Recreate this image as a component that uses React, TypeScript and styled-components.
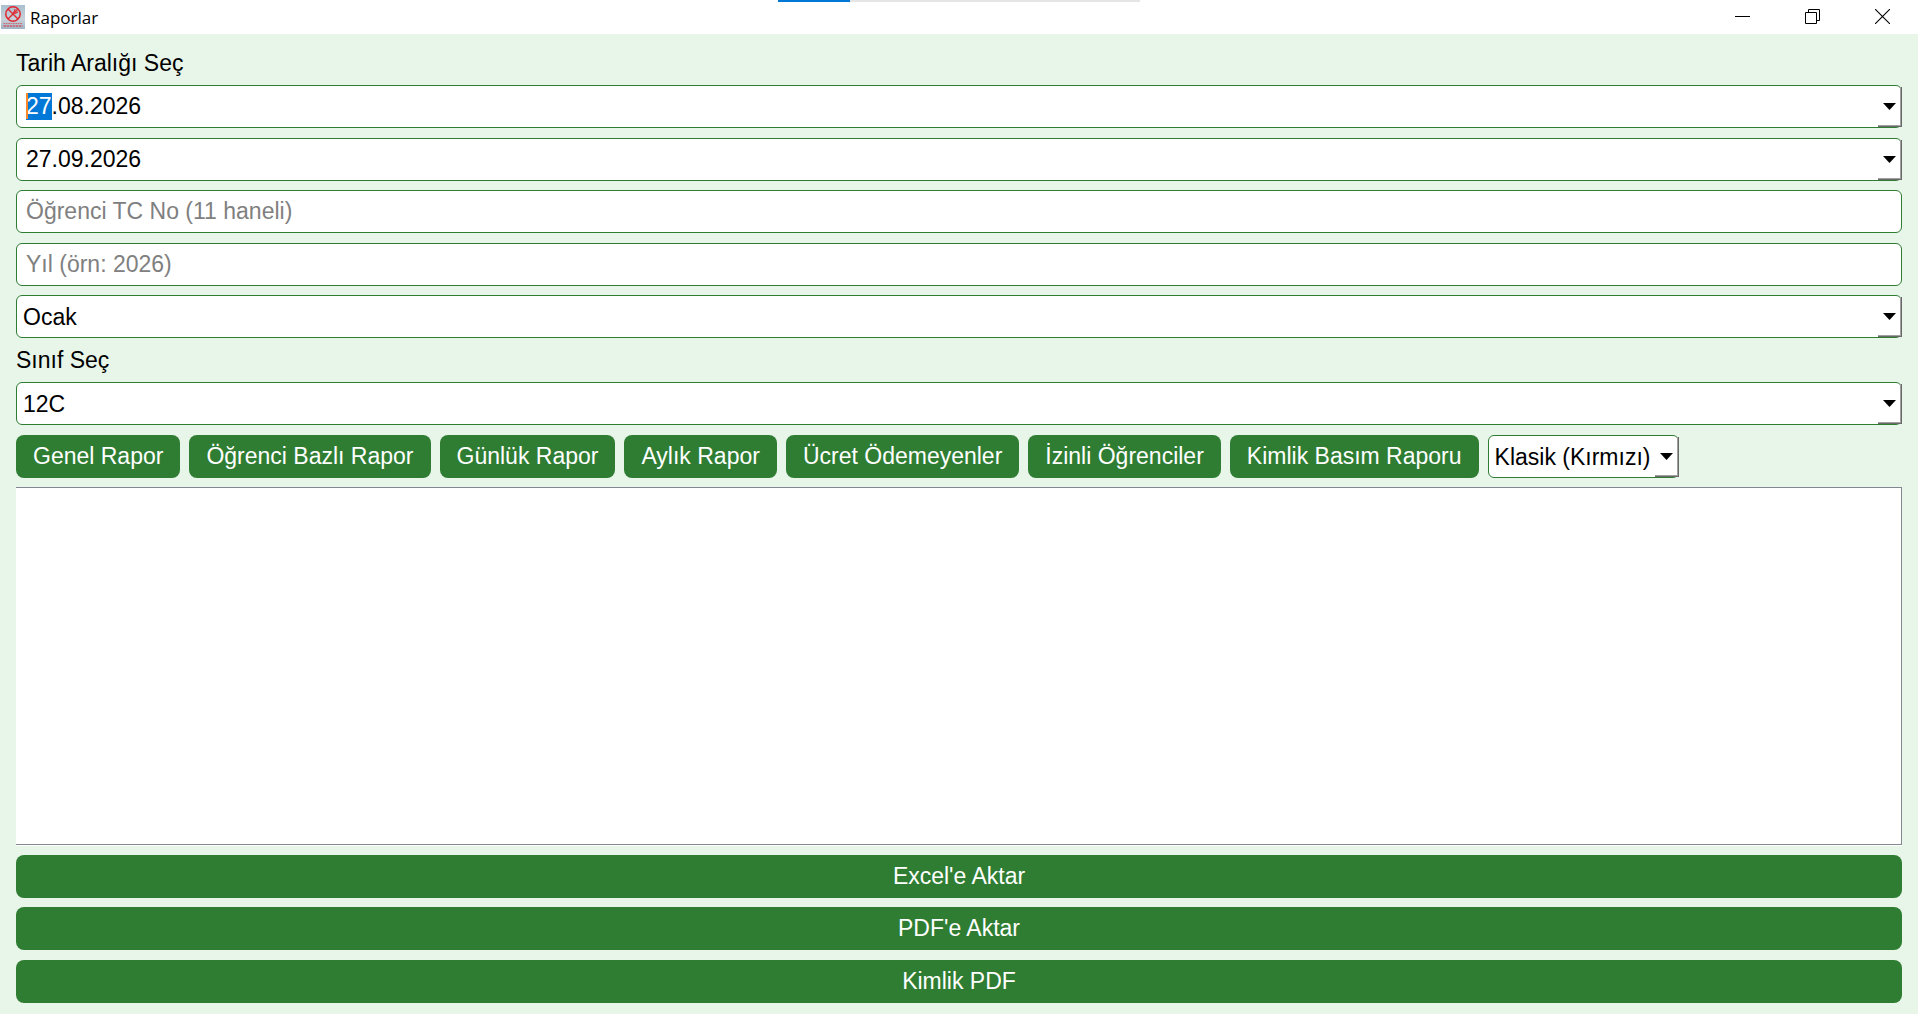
import React, { useEffect, useRef } from 'react';
import styled, { createGlobalStyle } from 'styled-components';

const green = '#2e7d32';

const GlobalStyle = createGlobalStyle`
  *, *::before, *::after { box-sizing: border-box; }
  body { margin: 0; background: #e8f5e9; }
`;

const Window = styled.div`
  display: flex;
  flex-direction: column;
  min-height: 100vh;
  background: #e8f5e9;
  color: #000;
  font: 23px/26px 'Liberation Sans', Arial, sans-serif;
`;

const TitleBar = styled.header`
  position: relative;
  display: flex;
  align-items: center;
  height: 34px;
  padding: 0 1px;
  background: #fff;
`;

const Title = styled.h1`
  flex: 1;
  margin: 0 0 0 5px;
  padding-top: 2px;
  font: 400 17px/24px 'Open Sans', 'Segoe UI', sans-serif;
`;

const WindowButton = styled.button`
  display: flex;
  align-items: center;
  justify-content: center;
  width: 70px;
  height: 34px;
  padding: 0 0 1px;
  border: 0;
  background: transparent;
`;

const LoadingTrack = styled.div`
  position: absolute;
  top: 0;
  left: 0;
  right: 0;
  width: 362px;
  height: 2px;
  margin: 0 auto;
  background: #e5e5e5;
`;

const LoadingFill = styled.div`
  width: 20%;
  height: 100%;
  background: #0078d7;
`;

const Content = styled.main`
  flex: 1;
  display: flex;
  flex-direction: column;
  gap: 9px;
  padding: 16px 16px 11px;
`;

const Group = styled.div`
  display: flex;
  flex-direction: column;
  gap: 10px;
`;

const Label = styled.label`
  display: block;
`;

const Field = styled.div`
  position: relative;
  display: flex;
`;

const TextBox = styled.input`
  width: 100%;
  height: 43px;
  padding: 0 9px 1px;
  border: 1px solid ${green};
  border-radius: 6px;
  outline: 0;
  background: #fff;
  color: #000;
  font: inherit;

  &::placeholder { color: #808080; opacity: 1; }
  &::selection { background: #0078d7; color: #fff; }
`;

const Caret = styled.span`
  position: absolute;
  top: 8px;
  left: 10px;
  width: 2px;
  height: 26px;
  background: #ff8728;
`;

const Select = styled.select<{ $fit?: boolean }>`
  appearance: none;
  width: ${(p) => (p.$fit ? 'auto' : '100%')};
  height: 43px;
  padding: 0 ${(p) => (p.$fit ? 27 : 24)}px 0 6px;
  border: 1px solid ${green};
  border-radius: 6px;
  outline: 0;
  background: #fff;
  color: #000;
  font: inherit;
`;

const DropMark = styled.span`
  position: absolute;
  top: 2px;
  right: 0;
  bottom: 1px;
  display: flex;
  align-items: center;
  justify-content: center;
  width: 24px;
  border: solid #696969;
  border-width: 0 1px 1px 0;
  box-shadow: inset -1px -1px #a0a0a0;
  pointer-events: none;
`;

const Toolbar = styled.div`
  display: flex;
  flex-wrap: wrap;
  gap: 9px;
`;

const Button = styled.button`
  height: 43px;
  padding: 0 17px 1px;
  border: 0;
  border-radius: 8px;
  background: ${green};
  color: #fff;
  font: inherit;
  white-space: nowrap;
`;

const Results = styled.section`
  flex: 1;
  min-height: 120px;
  margin-bottom: 1px;
  border: solid #828790;
  border-width: 1px 1px 1px 0;
  background: #fff;
  box-shadow: 0 1px #fff;
`;

const Arrow = () => (
  <DropMark>
    <svg width="13" height="7" viewBox="0 0 13 7" aria-hidden="true">
      <path d="M0 0H13L6.5 7Z" fill="#000" />
    </svg>
  </DropMark>
);

const AppIcon = () => (
  <svg width="24" height="24" viewBox="0 0 24 24" aria-hidden="true">
    <defs>
      <linearGradient id="sky" x1="0" y1="0" x2="0" y2="1">
        <stop offset="0" stopColor="#a9c0cf" />
        <stop offset="0.6" stopColor="#c9d0d8" />
        <stop offset="1" stopColor="#9fb4c5" />
      </linearGradient>
    </defs>
    <rect width="24" height="24" fill="url(#sky)" />
    <g fill="none" stroke="#e0262e" strokeLinecap="round">
      <circle cx="12" cy="9" r="7.2" strokeWidth="1.5" />
      <path d="M7.5 4.5L16.5 13.5M16 5L7.5 13.5" strokeWidth="1.4" />
      <path d="M14 4.6L12.6 7.4M16.6 7L14 8.4" strokeWidth="1.1" />
    </g>
    <g fill="none" stroke="#d8404a">
      <path d="M2.5 18.5H21.5" strokeWidth="1" strokeDasharray="1.6 0.8" opacity="0.7" />
      <path d="M2.5 21H21.5" strokeWidth="1.4" strokeDasharray="2.4 0.7" opacity="0.8" />
    </g>
  </svg>
);

interface DateFieldProps {
  id: string;
  label: string;
  value: string;
  active?: boolean;
}

const DateField = ({ id, label, value, active }: DateFieldProps) => {
  const box = useRef<HTMLInputElement>(null);

  useEffect(() => {
    if (active && box.current) {
      box.current.focus();
      box.current.setSelectionRange(0, 2);
    }
  }, [active]);

  return (
    <Field>
      <TextBox id={id} ref={box} defaultValue={value} aria-label={label} />
      {active && <Caret />}
      <Arrow />
    </Field>
  );
};

const reports = [
  'Genel Rapor',
  'Öğrenci Bazlı Rapor',
  'Günlük Rapor',
  'Aylık Rapor',
  'Ücret Ödemeyenler',
  'İzinli Öğrenciler',
  'Kimlik Basım Raporu',
];

export default function App() {
  return (
    <Window lang="tr">
      <GlobalStyle />
      <TitleBar>
        <AppIcon />
        <Title>Raporlar</Title>
        <LoadingTrack>
          <LoadingFill />
        </LoadingTrack>
        <WindowButton aria-label="Simge durumuna küçült">
          <svg width="15" height="15" viewBox="0 0 15 15">
            <path d="M0 7.5H15" stroke="#000" />
          </svg>
        </WindowButton>
        <WindowButton aria-label="Önceki boyuta getir">
          <svg width="15" height="15" viewBox="0 0 15 15" fill="none" stroke="#000">
            <path d="M0.5 3.5H11.5V14.5H0.5ZM3.5 3.5V0.5H14.5V11.5H11.5" />
          </svg>
        </WindowButton>
        <WindowButton aria-label="Kapat">
          <svg width="15" height="15" viewBox="0 0 15 15">
            <path d="M0 0L15 15M15 0L0 15" stroke="#000" strokeWidth="1.1" />
          </svg>
        </WindowButton>
      </TitleBar>
      <Content>
        <Label htmlFor="start">Tarih Aralığı Seç</Label>
        <Group>
          <DateField id="start" label="Başlangıç tarihi" value="27.08.2026" active />
          <DateField id="end" label="Bitiş tarihi" value="27.09.2026" />
        </Group>
        <Group>
          <TextBox aria-label="Öğrenci TC No" placeholder="Öğrenci TC No (11 haneli)" />
          <TextBox aria-label="Yıl" placeholder="Yıl (örn: 2026)" />
        </Group>
        <Field>
          <Select aria-label="Ay">
            <option>Ocak</option>
          </Select>
          <Arrow />
        </Field>
        <Label htmlFor="class">Sınıf Seç</Label>
        <Group>
          <Field>
            <Select id="class">
              <option>12C</option>
            </Select>
            <Arrow />
          </Field>
          <Toolbar>
            {reports.map((name) => (
              <Button key={name}>{name}</Button>
            ))}
            <Field>
              <Select $fit aria-label="Kart şablonu">
                <option>Klasik (Kırmızı)</option>
              </Select>
              <Arrow />
            </Field>
          </Toolbar>
        </Group>
        <Results aria-label="Rapor sonuçları" />
        <Button>Excel'e Aktar</Button>
        <Group>
          <Button>PDF'e Aktar</Button>
          <Button>Kimlik PDF</Button>
        </Group>
      </Content>
    </Window>
  );
}
